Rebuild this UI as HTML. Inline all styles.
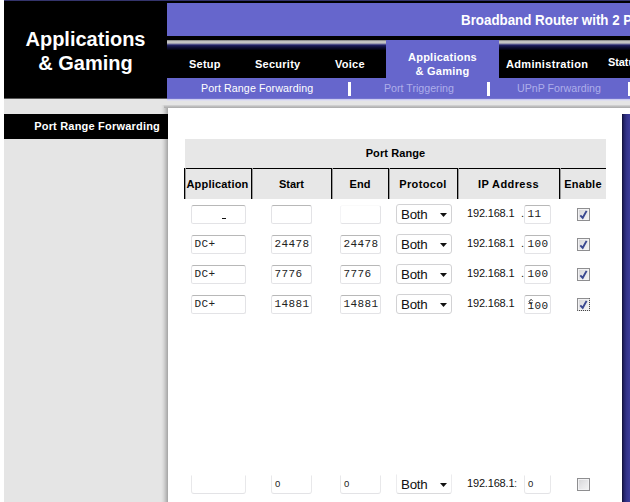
<!DOCTYPE html>
<html><head><meta charset="utf-8">
<style>
html,body{margin:0;padding:0;}
body{width:630px;height:502px;overflow:hidden;background:#fff;position:relative;font-family:"Liberation Sans",sans-serif;}
.abs{position:absolute;}
#topline{left:4px;top:0;width:626px;height:3px;background:linear-gradient(#34346c 0,#34346c 1px,#000 1.5px,#000 3px);}
#blk{left:4px;top:1px;width:163px;height:97px;background:#000;}
#title{left:4px;top:27px;width:163px;text-align:center;color:#fff;font-weight:bold;font-size:20px;line-height:24px;}
#band{left:167px;top:3px;width:463px;height:33px;background:#6666cc;}
#bandtxt{left:461px;top:12px;color:#fff;font-weight:bold;font-size:14.5px;white-space:nowrap;line-height:17px;transform-origin:0 0;transform:scaleX(0.92);}
#navbg{left:167px;top:36px;width:463px;height:42px;background:#000;}
#shine{left:167px;top:40px;width:463px;height:11px;background:linear-gradient(#707070 0px,#c0c0c0 1.2px,#c4c4c4 2.5px,#9c9cb0 3.5px,#505088 4.5px,#1e1e5c 5.5px,#10103c 7px,#06061c 9px,#000 10.5px);}
#tab{left:386px;top:40px;width:113px;height:40px;background:#6666cc;}
.nav{color:#fff;font-weight:bold;font-size:11px;letter-spacing:0.25px;white-space:nowrap;line-height:13px;}
#sub{left:167px;top:78px;width:463px;height:20px;background:#6666cc;}
.subt{font-size:10.67px;white-space:nowrap;line-height:13px;top:82px;}
.sep{top:82px;width:3px;height:14px;background:#fff;}
#side{left:4px;top:98px;width:164px;height:404px;background:#e5e5e5;}
#sshadow{left:161px;top:105px;width:7px;height:397px;background:linear-gradient(90deg,#e5e5e5 0px,#dcdcdc 2px,#c8c8c8 4px,#b0b0b0 6px,#a4a4a4 7px);}
#sideblk{left:4px;top:114px;width:164px;height:25px;background:#000;}
#sidetxt{left:4px;top:120px;width:156px;text-align:right;color:#fff;font-weight:bold;font-size:11px;line-height:13px;letter-spacing:0.2px;}
#greybar{left:164px;top:98px;width:466px;height:10px;background:linear-gradient(#e5e5e5 0px,#e5e5e5 6.5px,#c4c4c4 8px,#aaaaaa 10px);}
#content{left:168px;top:108px;width:455px;height:394px;background:#fff;}
#rbar{left:622px;top:114px;width:8px;height:388px;background:linear-gradient(90deg,#0e0e34 0px,#24246a 2px,#323288 4.5px,#3c3c9a 8px);}
#th1{left:185px;top:139px;width:421px;height:29px;background:#e7e7e7;}
#thline{left:184px;top:168px;width:422px;height:2px;background:linear-gradient(#000 0,#000 1px,#a0a0a0 1px,#a0a0a0 2px);}
#th2{left:185px;top:169px;width:421px;height:30px;background:#e7e7e7;}
.h{font-weight:bold;font-size:11px;color:#000;line-height:13px;text-align:center;}
.vl{top:168px;width:2px;height:31px;background:linear-gradient(90deg,#000 0,#000 1px,#9a9a9a 1px,#9a9a9a 2px);}
.inp{box-sizing:border-box;border:1px solid #e3e3e6;border-top-color:#b8b8b8;background:#fff;height:19px;font-family:"Liberation Mono",monospace;font-size:11px;line-height:17px;padding-left:2.5px;letter-spacing:0.4px;color:#222;border-radius:2.5px;white-space:nowrap;overflow:hidden;}
.inp.last{border-top-color:#fff;height:19px;border-left-color:#e8e8ea;border-right-color:#e8e8ea;font-family:"Liberation Sans",sans-serif;font-size:9.5px;line-height:16px;letter-spacing:0;padding-left:3px;border-radius:0 0 3px 3px;}
.sel.slast{border-color:#fff #ececee #dadadc #ececee;border-radius:0 0 3px 3px;}
.cb.cbf{border-style:solid dotted dotted solid;border-color:#8e8e90 #444 #444 #8e8e90;}
.inp.nob{border-top-color:#fafafa;border-left-color:#f4f4f6;}
.sel{box-sizing:border-box;border:1px solid #d2d2d4;background:#fff;height:20px;width:56px;font-size:13.33px;line-height:19px;padding-left:4px;border-radius:3px;color:#111;letter-spacing:-0.25px;}
.arr{position:absolute;left:43px;top:8px;}
.ip{font-size:11px;line-height:13px;color:#111;white-space:nowrap;letter-spacing:-0.17px;}
.cb{box-sizing:border-box;width:13px;height:13px;border:1px solid #8e8e90;background:linear-gradient(135deg,#d4d4d6 0%,#e6e6e8 50%,#f4f4f4 100%);box-shadow:inset 0 0 0 1px #f2f2f4;}
</style></head><body>
<div class="abs" id="topline"></div>
<div class="abs" id="band"></div>
<div class="abs" id="bandtxt">Broadband Router with 2 Phone Ports</div>
<div class="abs" id="navbg"></div>
<div class="abs" id="shine"></div>
<div class="abs" id="tab"></div>
<div class="abs" id="blk"></div>
<div class="abs" id="title">Applications<br>&amp; Gaming</div>
<div class="abs nav" style="left:189px;top:58px;">Setup</div>
<div class="abs nav" style="left:255px;top:58px;">Security</div>
<div class="abs nav" style="left:335px;top:58px;">Voice</div>
<div class="abs nav" style="left:386px;top:50px;width:113px;text-align:center;line-height:14px;">Applications<br>&amp; Gaming</div>
<div class="abs nav" style="left:506px;top:58px;letter-spacing:0.33px;">Administration</div>
<div class="abs nav" style="left:608px;top:56px;letter-spacing:-0.1px;">Status</div>
<div class="abs" id="sub"></div>
<div class="abs subt" style="left:201px;color:#fff;letter-spacing:0.1px;">Port Range Forwarding</div>
<div class="abs sep" style="left:348px;"></div>
<div class="abs subt" style="left:384px;color:#aeaeea;">Port Triggering</div>
<div class="abs sep" style="left:487px;"></div>
<div class="abs subt" style="left:517px;color:#aeaeea;">UPnP Forwarding</div>
<div class="abs sep" style="left:628px;"></div>
<div class="abs" id="side"></div>
<div class="abs" id="sshadow"></div>
<div class="abs" id="greybar"></div>
<div class="abs" style="left:4px;top:98px;width:163px;height:1px;background:#595959;"></div>
<div class="abs" style="left:167px;top:98px;width:463px;height:1px;background:#7474d0;"></div>
<div class="abs" style="left:167px;top:99px;width:463px;height:1px;background:#ccccf0;"></div>
<div class="abs" style="left:167px;top:100px;width:463px;height:1px;background:#dedef0;"></div>

<div class="abs" id="sideblk"></div>
<div class="abs" id="sidetxt">Port Range Forwarding</div>
<div class="abs" id="content"></div>
<div class="abs" id="rbar"></div>
<div class="abs" id="th1"></div>
<div class="abs h" style="left:185px;top:147px;width:421px;letter-spacing:0.1px;">Port Range</div>
<div class="abs" id="thline"></div>
<div class="abs" id="th2"></div>
<div class="abs vl" style="left:184px;"></div>
<div class="abs vl" style="left:251px;"></div>
<div class="abs vl" style="left:331px;"></div>
<div class="abs vl" style="left:388px;"></div>
<div class="abs vl" style="left:457px;"></div>
<div class="abs vl" style="left:559px;"></div>
<div class="abs h" style="left:185px;top:178px;width:65px;letter-spacing:0.2px;">Application</div>
<div class="abs h" style="left:252px;top:178px;width:79px;">Start</div>
<div class="abs h" style="left:332px;top:178px;width:56px;">End</div>
<div class="abs h" style="left:389px;top:178px;width:68px;letter-spacing:0.35px;">Protocol</div>
<div class="abs h" style="left:458px;top:178px;width:101px;letter-spacing:0.4px;">IP Address</div>
<div class="abs h" style="left:560px;top:178px;width:46px;letter-spacing:0.25px;">Enable</div>
<div id="rows">
<div class="abs inp" style="left:191px;top:205px;width:55px;"></div>
<div class="abs inp" style="left:271px;top:205px;width:41px;"></div>
<div class="abs inp nob" style="left:340px;top:205px;width:41px;"></div>
<div class="abs sel" style="left:396px;top:204px;">Both<svg class="arr" width="7" height="4" viewBox="0 0 7 4"><path d="M0 0H7L3.5 4Z" fill="#111"/></svg></div>
<div class="abs ip" style="left:467px;top:207px;">192.168.1</div>
<div class="abs ip" style="left:521px;top:207px;">.</div>
<div class="abs inp" style="left:524px;top:205px;width:27px;">11</div>
<div class="abs cb" style="left:577px;top:208px;"><svg width="11" height="11" viewBox="0 0 11 11" style="position:absolute;left:0;top:0"><path d="M2.3 6.3L4.7 8.8L8.6 1.9" stroke="#3a4890" stroke-width="1.9" fill="none"/></svg></div>
<div class="abs inp" style="left:191px;top:235px;width:55px;">DC+</div>
<div class="abs inp" style="left:271px;top:235px;width:41px;">24478</div>
<div class="abs inp" style="left:340px;top:235px;width:41px;">24478</div>
<div class="abs sel" style="left:396px;top:234px;">Both<svg class="arr" width="7" height="4" viewBox="0 0 7 4"><path d="M0 0H7L3.5 4Z" fill="#111"/></svg></div>
<div class="abs ip" style="left:467px;top:237px;">192.168.1</div>
<div class="abs ip" style="left:521px;top:237px;">.</div>
<div class="abs inp" style="left:524px;top:235px;width:27px;">100</div>
<div class="abs cb" style="left:577px;top:238px;"><svg width="11" height="11" viewBox="0 0 11 11" style="position:absolute;left:0;top:0"><path d="M2.3 6.3L4.7 8.8L8.6 1.9" stroke="#3a4890" stroke-width="1.9" fill="none"/></svg></div>
<div class="abs inp" style="left:191px;top:265px;width:55px;">DC+</div>
<div class="abs inp" style="left:271px;top:265px;width:41px;">7776</div>
<div class="abs inp" style="left:340px;top:265px;width:41px;">7776</div>
<div class="abs sel" style="left:396px;top:264px;">Both<svg class="arr" width="7" height="4" viewBox="0 0 7 4"><path d="M0 0H7L3.5 4Z" fill="#111"/></svg></div>
<div class="abs ip" style="left:467px;top:267px;">192.168.1</div>
<div class="abs ip" style="left:521px;top:267px;">.</div>
<div class="abs inp" style="left:524px;top:265px;width:27px;">100</div>
<div class="abs cb" style="left:577px;top:268px;"><svg width="11" height="11" viewBox="0 0 11 11" style="position:absolute;left:0;top:0"><path d="M2.3 6.3L4.7 8.8L8.6 1.9" stroke="#3a4890" stroke-width="1.9" fill="none"/></svg></div>
<div class="abs inp" style="left:191px;top:295px;width:55px;">DC+</div>
<div class="abs inp" style="left:271px;top:295px;width:41px;">14881</div>
<div class="abs inp" style="left:340px;top:295px;width:41px;">14881</div>
<div class="abs sel" style="left:396px;top:294px;">Both<svg class="arr" width="7" height="4" viewBox="0 0 7 4"><path d="M0 0H7L3.5 4Z" fill="#111"/></svg></div>
<div class="abs ip" style="left:467px;top:297px;">192.168.1</div>
<div class="abs inp" style="left:524px;top:295px;width:27px;line-height:21px;">100<svg width="6" height="6" viewBox="0 0 6 6" style="position:absolute;left:3px;top:3px"><path d="M4.6 3.6A1.8 1.8 0 1 1 4.6 1.6" stroke="#111" stroke-width="0.9" fill="none"/></svg></div>
<div class="abs cb cbf" style="left:577px;top:298px;"><svg width="11" height="11" viewBox="0 0 11 11" style="position:absolute;left:0;top:0"><path d="M2.3 6.3L4.7 8.8L8.6 1.9" stroke="#3a4890" stroke-width="1.9" fill="none"/></svg></div>
<div class="abs inp last" style="left:191px;top:475px;width:55px;"></div>
<div class="abs inp last" style="left:271px;top:475px;width:41px;">0</div>
<div class="abs inp last" style="left:340px;top:475px;width:41px;">0</div>
<div class="abs sel slast" style="left:396px;top:474px;">Both<svg class="arr" width="7" height="4" viewBox="0 0 7 4"><path d="M0 0H7L3.5 4Z" fill="#111"/></svg></div>
<div class="abs ip" style="left:467px;top:477px;">192.168.1</div>
<div class="abs ip" style="left:514px;top:477px;color:#555;">:</div>
<div class="abs inp last" style="left:524px;top:475px;width:27px;">0</div>
<div class="abs cb" style="left:577px;top:478px;"></div>
<div class="abs" style="left:222px;top:218px;width:4px;height:1px;background:#111;"></div>
</div>
</body></html>
